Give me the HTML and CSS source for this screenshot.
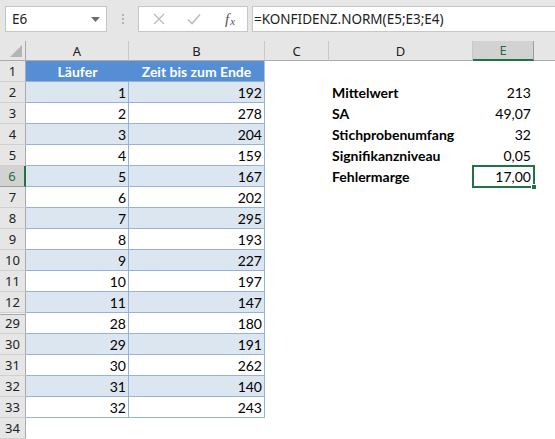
FILE: index.html
```html
<!DOCTYPE html>
<html>
<head>
<meta charset="utf-8">
<link rel="stylesheet" href="styles.css">
</head>
<body>
<div class="app">
  <div class="fbar">
    <div class="namebox">
      <span class="nb-text">E6</span>
      <svg class="nb-arrow" width="9" height="5" viewBox="0 0 9 5"><path d="M0 0h9L4.5 5z" fill="#6d6d6d"/></svg>
    </div>
    <div class="grip"><i></i><i></i><i></i></div>
    <div class="fxbox">
      <svg class="ic" width="12" height="12" viewBox="0 0 12 12"><path d="M1 1l10 10M11 1L1 11" stroke="#bdbdbd" stroke-width="1.4" fill="none"/></svg>
      <svg class="ic" width="14" height="12" viewBox="0 0 14 12"><path d="M1 6.5l4 4L13 1.5" stroke="#bdbdbd" stroke-width="1.6" fill="none"/></svg>
      <span class="fx">f<sub>x</sub></span>
    </div>
    <div class="formula">=KONFIDENZ.NORM(E5;E3;E4)</div>
  </div>

  <div class="sheet">
    <div class="row colhdr">
      <div class="corner"><svg width="12" height="12" viewBox="0 0 12 12"><path d="M12 0V12H0z" fill="#b4b4b4"/></svg></div>
      <div class="ch">A</div><div class="ch">B</div><div class="ch">C</div><div class="ch">D</div><div class="ch sel">E</div><div class="ch last"></div>
    </div>

    <div class="row"><div class="rh">1</div><div class="c th">Läufer</div><div class="c th tb">Zeit bis zum Ende</div><div class="c"></div><div class="c"></div><div class="c"></div><div class="c"></div></div>
    <div class="row band"><div class="rh">2</div><div class="c ta">1</div><div class="c tb">192</div><div class="c"></div><div class="c lbl">Mittelwert</div><div class="c val">213</div><div class="c"></div></div>
    <div class="row"><div class="rh">3</div><div class="c ta">2</div><div class="c tb">278</div><div class="c"></div><div class="c lbl">SA</div><div class="c val">49,07</div><div class="c"></div></div>
    <div class="row band"><div class="rh">4</div><div class="c ta">3</div><div class="c tb">204</div><div class="c"></div><div class="c lbl">Stichprobenumfang</div><div class="c val">32</div><div class="c"></div></div>
    <div class="row"><div class="rh">5</div><div class="c ta">4</div><div class="c tb">159</div><div class="c"></div><div class="c lbl">Signifikanzniveau</div><div class="c val">0,05</div><div class="c"></div></div>
    <div class="row band"><div class="rh selr">6</div><div class="c ta">5</div><div class="c tb">167</div><div class="c"></div><div class="c lbl">Fehlermarge</div><div class="c val active">17,00<span class="handle"></span></div><div class="c"></div></div>
    <div class="row"><div class="rh">7</div><div class="c ta">6</div><div class="c tb">202</div><div class="c"></div><div class="c"></div><div class="c"></div><div class="c"></div></div>
    <div class="row band"><div class="rh">8</div><div class="c ta">7</div><div class="c tb">295</div><div class="c"></div><div class="c"></div><div class="c"></div><div class="c"></div></div>
    <div class="row"><div class="rh">9</div><div class="c ta">8</div><div class="c tb">193</div><div class="c"></div><div class="c"></div><div class="c"></div><div class="c"></div></div>
    <div class="row band"><div class="rh">10</div><div class="c ta">9</div><div class="c tb">227</div><div class="c"></div><div class="c"></div><div class="c"></div><div class="c"></div></div>
    <div class="row"><div class="rh">11</div><div class="c ta">10</div><div class="c tb">197</div><div class="c"></div><div class="c"></div><div class="c"></div><div class="c"></div></div>
    <div class="row band"><div class="rh">12</div><div class="c ta">11</div><div class="c tb">147</div><div class="c"></div><div class="c"></div><div class="c"></div><div class="c"></div></div>
    <div class="row"><div class="rh gap">29</div><div class="c ta">28</div><div class="c tb">180</div><div class="c"></div><div class="c"></div><div class="c"></div><div class="c"></div></div>
    <div class="row band"><div class="rh">30</div><div class="c ta">29</div><div class="c tb">191</div><div class="c"></div><div class="c"></div><div class="c"></div><div class="c"></div></div>
    <div class="row"><div class="rh">31</div><div class="c ta">30</div><div class="c tb">262</div><div class="c"></div><div class="c"></div><div class="c"></div><div class="c"></div></div>
    <div class="row band"><div class="rh">32</div><div class="c ta">31</div><div class="c tb">140</div><div class="c"></div><div class="c"></div><div class="c"></div><div class="c"></div></div>
    <div class="row"><div class="rh">33</div><div class="c ta">32</div><div class="c tb">243</div><div class="c"></div><div class="c"></div><div class="c"></div><div class="c"></div></div>
    <div class="row"><div class="rh">34</div><div class="c"></div><div class="c"></div><div class="c"></div><div class="c"></div><div class="c"></div><div class="c"></div></div>
  </div>
</div>
</body>
</html>
```

FILE: styles.css
```css
* { box-sizing: border-box; }
html, body { margin: 0; padding: 0; background: #fff; }
body { width: 555px; height: 439px; overflow: hidden; }

.app { display: flex; flex-direction: column; width: 555px; }

.fbar {
  height: 41px;
  background: #e6e6e6;
  display: flex;
  align-items: flex-start;
  padding-top: 6px;
  padding-left: 5px;
}
.namebox {
  width: 102px; height: 26px;
  background: #fff;
  border: 1px solid #c6c6c6;
  display: flex; align-items: center; justify-content: space-between;
  padding: 0 6px 0 6px;
}
.nb-text { font-family: "Noto Sans", sans-serif; font-size: 13.5px; color: #222; }
.grip {
  width: 31px; height: 26px;
  display: flex; flex-direction: column; align-items: center; justify-content: center; gap: 2px;
}
.grip i { display: block; width: 2px; height: 2px; background: #b3b3b3; }
.fxbox {
  width: 110px; height: 26px;
  background: #fff;
  border: 1px solid #c6c6c6;
  display: flex; align-items: center;
  padding-left: 14px;
}
.fxbox .ic:nth-child(1) { margin-right: 22px; }
.fxbox .ic:nth-child(2) { margin-right: 24px; }
.fx {
  font-family: "Liberation Serif", serif; font-style: italic; font-size: 15px; color: #555;
  line-height: 1;
}
.fx sub { font-size: 11px; vertical-align: -1px; margin-left: 1px; }
.formula {
  margin-left: 4px;
  flex: 1; height: 26px;
  background: #fff;
  border: 1px solid #c6c6c6; border-right: none;
  display: flex; align-items: center;
  padding-left: 1px;
  font-family: "Noto Sans", sans-serif; font-size: 13.5px; color: #222;
  white-space: nowrap;
}

.sheet { display: flex; flex-direction: column; }
.row {
  display: grid;
  grid-template-columns: 26px 103px 136px 64px 144px 61px 1fr;
  height: 21px;
}
.colhdr { height: 20px; background: #e6e6e6; }
.corner {
  border-right: 1px solid #ababab; border-bottom: 1px solid #ababab;
  display: flex; align-items: flex-end; justify-content: flex-end;
  padding: 0 3px 3px 0;
}
.ch {
  border-right: 1px solid #c8c8c8;
  border-bottom: 1px solid #ababab;
  display: flex; align-items: center; justify-content: center;
  font-family: "Noto Sans", sans-serif; font-size: 13px; color: #222;
}
.ch.last { border-right: none; }
.ch.sel {
  background: #d2d2d2;
  color: #1e6e42;
  border-right-color: #9e9e9e;
  border-bottom: 2px solid #217346;
}

.rh {
  background: #e6e6e6;
  border-right: 1px solid #ababab;
  border-bottom: 1px solid #d0d0d0;
  display: flex; align-items: center; justify-content: center;
  font-family: "Noto Sans", sans-serif; font-size: 13px; color: #222;
}
.rh.selr {
  background: #d2d2d2;
  color: #1e6e42;
  border-right: 2px solid #217346;
  border-bottom-color: #9e9e9e;
}
.rh.gap { box-shadow: inset 0 1px 0 #f2f2f2, inset 0 2px 0 #a9a9a9; }

.c {
  position: relative;
  font-family: "Lato", sans-serif; font-size: 14px; color: #000;
  display: flex; align-items: center;
  white-space: nowrap;
}
.ta, .tb, .th {
  border-bottom: 1px solid #95b3d7;
  justify-content: flex-end;
  padding-right: 2px;
}
.ta { border-right: 1px solid #95b3d7; }
.tb { border-right: 1px solid #95b3d7; }
.band .ta, .band .tb { background: #dce6f1; }
.th {
  background: #558ed5;
  color: #fff;
  font-weight: 700;
  justify-content: center;
  padding-right: 0;
  border-right-color: #a9c4e8;
  border-bottom-color: #95b3d7;
}
.th:first-of-type { border-right: 1px solid #a9c4e8; }
.lbl { font-weight: 700; padding-left: 3px; }
.val { justify-content: flex-end; padding-right: 3px; }
.active {
  outline: 2px solid #217346;
  outline-offset: -1px;
}
.handle {
  position: absolute;
  right: -3px; bottom: -3px;
  width: 6px; height: 6px;
  background: #217346;
  border: 1px solid #fff;
}
```
